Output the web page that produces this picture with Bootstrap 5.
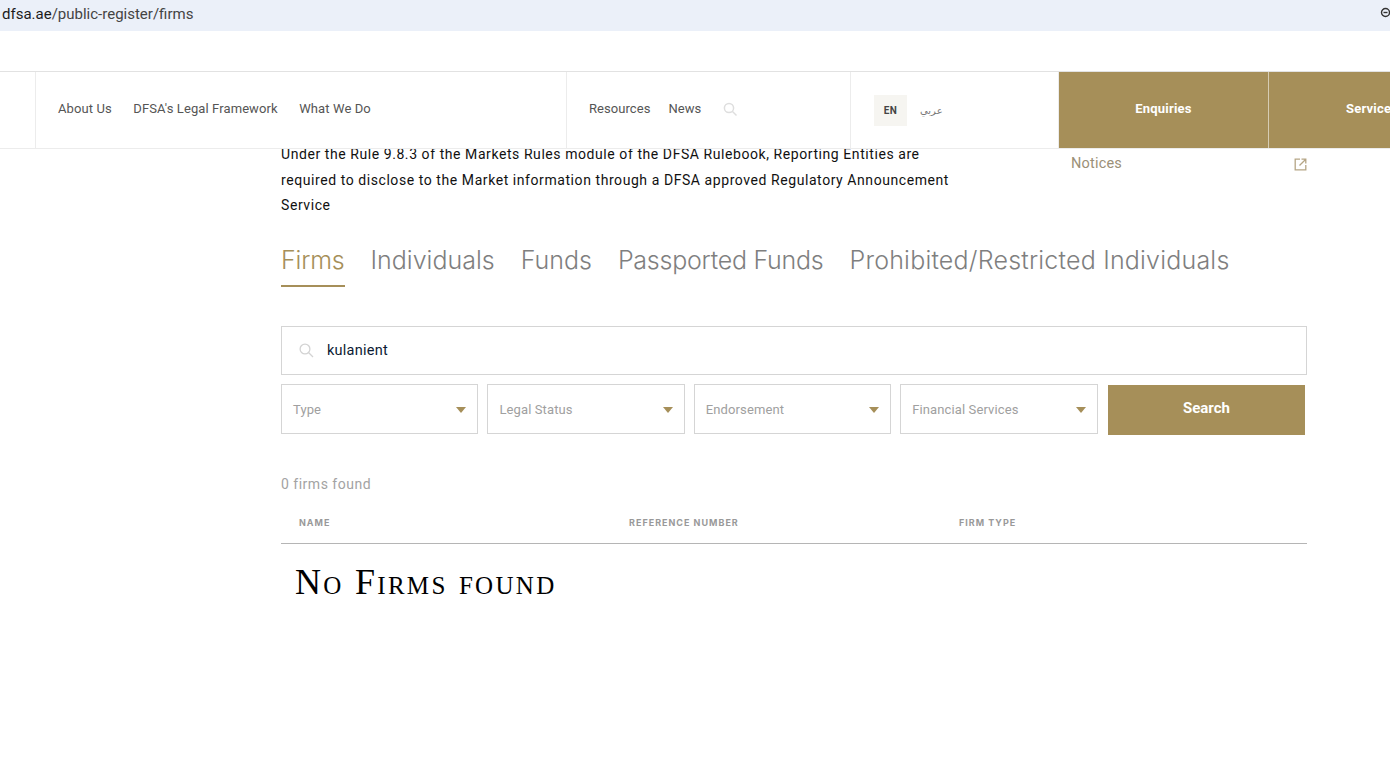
<!DOCTYPE html>
<html lang="en">
<head>
<meta charset="utf-8">
<title>DFSA Public Register</title>
<link href="https://cdn.jsdelivr.net/npm/bootstrap@5.3.0/dist/css/bootstrap.min.css" rel="stylesheet">
<style>
html,body{height:763px;overflow:hidden;background:#fff}
body{font-family:"Inter","Roboto",sans-serif;color:#000}
.addr-bar{height:31px;background:#ebf0f9;padding:0 2px;font-family:"Roboto",sans-serif;font-size:15px;line-height:29px;color:#444;overflow:hidden}
.addr-bar b{font-weight:400;color:#1c1c1c}
.zoom-ic{margin-right:-3px;margin-top:7px}
.top-gap{height:40px}
.head-clip{overflow:hidden;position:relative;z-index:2}
.site-head{height:78px;width:1500px;border-top:1px solid #e2e2e2;border-bottom:1px solid #ececec;font-family:"Roboto",sans-serif;font-size:13px;letter-spacing:.06px;color:#555}
.cell{border-right:1px solid #ececec;height:100%;padding-bottom:2px}
.cell-a{width:36px}
.cell-b{width:531px;padding-left:22px;gap:21.5px;letter-spacing:.1px}
.cell-c{width:284px;padding-left:22px;gap:18px}
.cell-c svg{margin-left:4px}
.cell-d{width:208px;padding-left:23px;gap:13px;padding-bottom:0}
.lang-on{width:33px;height:31px;background:#f6f5f1;font-size:10px;font-weight:700;letter-spacing:.5px;color:#444;margin-top:1px}
.lang-alt{font-family:"DejaVu Sans",sans-serif;font-size:10px;color:#777;margin-top:1px}
.gold-cell{background:#a68f59;color:#fff;font-weight:700;font-size:13px;letter-spacing:.2px;height:100%;padding-bottom:2px}
.gold-a{width:210px;border-right:1px solid #d6ccb4}
.gold-b{width:209px;padding-right:3px}
.page-main{width:1026px;margin:-7px 0 0 281px;position:relative}
.intro-text{width:680px;font-size:14px;line-height:25.5px;color:#111;font-family:"Roboto",sans-serif;letter-spacing:.57px;margin:0}
.side-link{margin-left:110px;width:236px;margin-top:8px;height:28px;font-family:"Roboto",sans-serif;font-size:14.5px;color:#9b9077;letter-spacing:.2px}
.tab-row{gap:26px;margin-top:22.5px}
.tab-item{font-size:25px;line-height:32px;height:46px;color:#7f7f7f;font-weight:300;text-decoration:none;padding-top:3px;font-family:"Inter",sans-serif}
.tab-item.on{color:#a68f59;border-bottom:2px solid #a68f59;letter-spacing:-.2px}
.tab-tight{letter-spacing:-.25px}
.tab-wide{letter-spacing:.2px}
.find-box{height:49px;margin-top:39px;border:1px solid #d5d5d5;padding-left:17px;gap:13px;font-family:"Roboto",sans-serif;font-size:14.5px;color:#0c1b33;letter-spacing:.25px}
.filter-row{margin-top:9px;gap:9px;height:51px}
.pick{width:197.4px;height:50px;border:1px solid #d5d5d5;padding:2px 11px 0;font-family:"Roboto",sans-serif;font-size:13px;color:#a0a0a0;letter-spacing:.12px}
.caret-ic{width:0;height:0;border-left:5.5px solid transparent;border-right:5.5px solid transparent;border-top:6px solid #a68f59}
.go-btn{width:197px;height:50px;margin:1px 0 0 1.4px;background:#a68f59;color:#fff;border:0;border-radius:0;font-family:"Roboto",sans-serif;font-weight:700;font-size:15px;padding:0 0 4px}
.go-btn:hover{background:#a68f59;color:#fff}
.count-line{margin-top:39px;height:20px;font-size:14px;line-height:20px;color:#a3a3a3;font-family:"Roboto",sans-serif;letter-spacing:.5px}
.head-row{height:50px;border-bottom:1px solid #b5b5b5;padding:8px 0 0 18px;font-size:9px;font-weight:700;letter-spacing:1px;color:#999;font-family:"Inter",sans-serif}
.head-row span{width:330px}
.none-title{font-family:"Liberation Serif",serif;font-variant:small-caps;font-size:36px;font-weight:400;line-height:40px;margin:18px 0 0 14px;color:#000;letter-spacing:2.3px}
</style>
</head>
<body>
<div class="addr-bar d-flex justify-content-between">
  <div><b>dfsa.ae</b>/public-register/firms</div>
  <svg class="zoom-ic" width="11" height="11" viewBox="0 0 11 11" fill="none" stroke="#333" stroke-width="1.4"><circle cx="5.5" cy="5.5" r="4"/><path d="M3.5 5.5h4"/></svg>
</div>
<div class="top-gap"></div>
<div class="head-clip">
<header class="site-head d-flex">
  <div class="cell cell-a"></div>
  <nav class="cell cell-b d-flex align-items-center"><span>About Us</span><span>DFSA's Legal Framework</span><span>What We Do</span></nav>
  <div class="cell cell-c d-flex align-items-center"><span>Resources</span><span>News</span>
    <svg width="15" height="15" viewBox="0 0 15 15" fill="none" stroke="#dedede" stroke-width="1.5"><circle cx="6" cy="6" r="4.6"/><path d="M9.5 9.5l4 4"/></svg>
  </div>
  <div class="cell cell-d d-flex align-items-center"><span class="lang-on d-flex align-items-center justify-content-center">EN</span><span class="lang-alt">عربي</span></div>
  <div class="gold-cell gold-a d-flex align-items-center justify-content-center">Enquiries</div>
  <div class="gold-cell gold-b d-flex align-items-center justify-content-center">Services</div>
</header>
</div>
<main class="page-main">
  <div class="d-flex">
    <p class="intro-text">Under the Rule 9.8.3 of the Markets Rules module of the DFSA Rulebook, Reporting Entities are required to disclose to the Market information through a DFSA approved Regulatory Announcement Service</p>
    <div class="side-link d-flex justify-content-between align-items-center"><span>Notices</span>
      <svg width="13" height="13" viewBox="0 0 13 13" fill="none" stroke="#b5a585" stroke-width="1.3"><path d="M6 1.2H1.2v10.6h10.6V7M7.5 1.2h4.3v4.3M11.8 1.2L5.5 7.5"/></svg>
    </div>
  </div>
  <div class="tab-row d-flex">
    <a class="tab-item on" href="#">Firms</a><a class="tab-item" href="#">Individuals</a><a class="tab-item" href="#">Funds</a><a class="tab-item tab-tight" href="#">Passported Funds</a><a class="tab-item tab-wide" href="#">Prohibited/Restricted Individuals</a>
  </div>
  <div class="find-box d-flex align-items-center">
    <svg width="15" height="15" viewBox="0 0 15 15" fill="none" stroke="#d3d3d3" stroke-width="1.3"><circle cx="6" cy="6" r="4.9"/><path d="M9.5 9.5l4.5 4.5"/></svg>
    <span>kulanient</span>
  </div>
  <div class="filter-row d-flex">
    <div class="pick d-flex justify-content-between align-items-center"><span>Type</span><i class="caret-ic"></i></div>
    <div class="pick d-flex justify-content-between align-items-center"><span>Legal Status</span><i class="caret-ic"></i></div>
    <div class="pick d-flex justify-content-between align-items-center"><span>Endorsement</span><i class="caret-ic"></i></div>
    <div class="pick d-flex justify-content-between align-items-center"><span>Financial Services</span><i class="caret-ic"></i></div>
    <button class="btn go-btn" type="button">Search</button>
  </div>
  <div class="count-line">0 firms found</div>
  <div class="head-row d-flex align-items-center"><span>NAME</span><span>REFERENCE NUMBER</span><span>FIRM TYPE</span></div>
  <h2 class="none-title">No Firms found</h2>
</main>
</body>
</html>
